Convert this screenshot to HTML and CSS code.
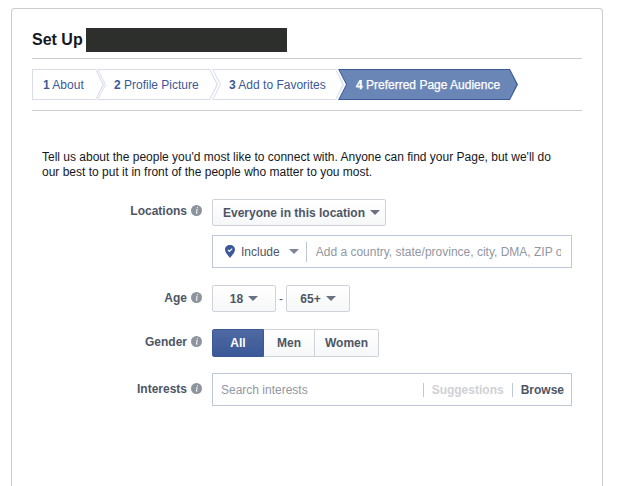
FILE: index.html
```html
<!DOCTYPE html>
<html lang="en">
<head>
<meta charset="utf-8">
<title>Set Up Page</title>
<link rel="stylesheet" href="styles.css">
</head>
<body>
<main class="card">
  <header class="title-row">
    <h1 class="title">Set Up</h1>
    <span class="redacted"></span>
  </header>
  <nav class="steps">
    <a class="step step-1"><b>1</b> About</a>
    <a class="step step-2"><b>2</b> Profile Picture</a>
    <a class="step step-3"><b>3</b> Add to Favorites</a>
    <a class="step step-4"><b>4</b> Preferred Page Audience</a>
  </nav>
  <p class="intro">Tell us about the people you'd most like to connect with. Anyone can find your Page, but we'll do our best to put it in front of the people who matter to you most.</p>
  <form class="form">
    <div class="label label-loc">Locations <svg class="info" viewBox="0 0 11 11"><circle cx="5.5" cy="5.5" r="5.5" fill="#8d949e"/><path d="M6 2.2h1.1l-.2 1.1H5.8zM5.4 4.3h1.3l-.7 3.4h.6l-.1.7H4.9l.7-3.4H5z" fill="#fff"/></svg></div>
    <div class="stack">
      <button type="button" class="btn btn-loc">Everyone in this location <i class="caret"></i></button>
      <div class="field field-include">
        <svg class="pin" viewBox="0 0 10 13"><path d="M5 0C2.2 0 0 2 0 4.700 0 7.600 3 10 5 13c2-3 5-5.400 5-8.300C10 2 7.800 0 5 0z" fill="#3b5998"/><path d="M2.900 4.900l1.500 1.500 2.800-2.800" fill="none" stroke="#fff" stroke-width="1.200"/></svg>
        <span class="include">Include</span><i class="caret caret-soft"></i>
        <span class="v-sep"></span>
        <span class="placeholder clip">Add a country, state/province, city, DMA, ZIP o</span>
      </div>
    </div>
    <div class="label label-age">Age <svg class="info" viewBox="0 0 11 11"><circle cx="5.5" cy="5.5" r="5.5" fill="#8d949e"/><path d="M6 2.2h1.1l-.2 1.1H5.8zM5.4 4.3h1.3l-.7 3.4h.6l-.1.7H4.9l.7-3.4H5z" fill="#fff"/></svg></div>
    <div class="age">
      <button type="button" class="btn btn-age">18 <i class="caret"></i></button>
      <span class="dash">-</span>
      <button type="button" class="btn btn-age">65+ <i class="caret"></i></button>
    </div>
    <div class="label label-gender">Gender <svg class="info" viewBox="0 0 11 11"><circle cx="5.5" cy="5.5" r="5.5" fill="#8d949e"/><path d="M6 2.2h1.1l-.2 1.1H5.8zM5.4 4.3h1.3l-.7 3.4h.6l-.1.7H4.9l.7-3.4H5z" fill="#fff"/></svg></div>
    <div class="segment">
      <button type="button" class="seg seg-on seg-all">All</button>
      <button type="button" class="seg seg-men">Men</button>
      <button type="button" class="seg seg-women">Women</button>
    </div>
    <div class="label label-int">Interests <svg class="info" viewBox="0 0 11 11"><circle cx="5.5" cy="5.5" r="5.5" fill="#8d949e"/><path d="M6 2.2h1.1l-.2 1.1H5.8zM5.4 4.3h1.3l-.7 3.4h.6l-.1.7H4.9l.7-3.4H5z" fill="#fff"/></svg></div>
    <div class="field field-int">
      <span class="placeholder grow">Search interests</span>
      <span class="v-sep v-sep-short"></span>
      <span class="suggest">Suggestions</span>
      <span class="v-sep v-sep-short"></span>
      <span class="browse">Browse</span>
    </div>
  </form>
</main>
</body>
</html>
```
FILE: styles.css
```css
* { box-sizing: border-box; }
html, body { height: 100%; overflow: hidden; }
body {
  margin: 0;
  padding: 8px 14px 0 11px;
  background: #fff;
  font-family: "Liberation Sans", Arial, sans-serif;
  font-size: 12px;
  color: #141823;
}
.card {
  height: 478px;
  padding: 0 20px;
  border: 1px solid #ccc;
  border-bottom: 0;
  border-radius: 4px 4px 0 0;
}
.title-row {
  display: flex;
  align-items: flex-start;
  gap: 3px;
  height: 50px;
  padding-top: 19px;
  border-bottom: 1px solid #ccc;
}
.title { margin: 0; font-size: 16px; line-height: 24px; font-weight: 700; color: #141823; }
.redacted { width: 201px; height: 24px; background: #2c2f2b; }
.steps {
  display: flex;
  height: 52px;
  padding: 10px 0;
  border-bottom: 1px solid #ccc;
}
.step {
  position: relative;
  isolation: isolate;
  display: flex;
  align-items: center;
  height: 31px;
  padding-left: 17px;
  color: #3b5998;
  background: #dadde9;
  white-space: pre;
  clip-path: polygon(0 0, calc(100% - 8px) 0, 100% 50%, calc(100% - 8px) 100%, 0 100%, 8px 50%);
}
.step::before {
  content: "";
  position: absolute;
  inset: 0;
  z-index: -1;
  background: #fff;
  clip-path: polygon(1.5px 1px, calc(100% - 8.5px) 1px, calc(100% - 1.5px) 50%, calc(100% - 8.5px) calc(100% - 1px), 1.5px calc(100% - 1px), 9px 50%);
}
.step b { font-weight: 700; }
.step-1 {
  width: 72px;
  padding-left: 11px;
  clip-path: polygon(0 0, calc(100% - 8px) 0, 100% 50%, calc(100% - 8px) 100%, 0 100%);
}
.step-1::before {
  clip-path: polygon(1px 1px, calc(100% - 8.5px) 1px, calc(100% - 1.5px) 50%, calc(100% - 8.5px) calc(100% - 1px), 1px calc(100% - 1px));
}
.step-2 { width: 121px; margin-left: -7px; }
.step-3 { width: 132px; margin-left: -6px; }
.step-4 {
  width: 180px;
  margin-left: -6px;
  padding-left: 18px;
  color: #fff;
  -webkit-text-stroke: 0.25px #fff;
  background: #3b5998;
}
.step-4::before { background: #6a86b6; }
.intro {
  width: 525px;
  margin: 39px 0 0 10px;
  font-size: 12px;
  line-height: 15px;
  color: #141823;
}
.form {
  display: grid;
  grid-template-columns: 170px 360px;
  column-gap: 10px;
  margin-top: 19px;
}
.label {
  display: flex;
  justify-content: flex-end;
  align-items: center;
  gap: 4px;
  height: 17px;
  font-weight: 700;
  color: #4e5665;
}
.info { width: 11px; height: 11px; flex: none; }
.label-loc { margin-top: 3px; }
.label-age { margin-top: 21px; }
.label-gender { margin-top: 21px; }
.label-int { margin-top: 23px; }
.stack { display: flex; flex-direction: column; align-items: flex-start; gap: 9px; }
.btn {
  display: inline-flex;
  align-items: center;
  justify-content: center;
  gap: 5px;
  height: 27px;
  padding: 0;
  border: 1px solid #cfd2d9;
  border-radius: 2px;
  background: linear-gradient(#fff, #f6f7f8);
  font: 700 12px "Liberation Sans", Arial, sans-serif;
  color: #4e5665;
}
.btn-loc { width: 174px; justify-content: flex-start; padding-left: 10px; }
.caret {
  display: inline-block;
  width: 0;
  height: 0;
  border: 5px solid transparent;
  border-top-color: #6a7180;
  border-bottom: 0;
}
.caret-soft { margin-left: 9px; border-top-color: #7d8594; }
.field {
  display: flex;
  align-items: center;
  width: 360px;
  height: 33px;
  border: 1px solid #bdc7d8;
  background: #fff;
}
.field-include { padding-left: 12px; }
.pin { width: 10px; height: 13px; flex: none; margin-right: 6px; }
.include { color: #4e5665; }
.v-sep { width: 1px; height: 20px; background: #bdc7d8; margin: 0 9px 0 7px; flex: none; }
.placeholder { color: #9197a3; white-space: nowrap; }
.clip { overflow: hidden; width: 245px; flex: none; }
.age { display: flex; align-items: center; margin-top: 17px; }
.btn-age { width: 64px; }
.dash { width: 10px; text-align: center; color: #4e5665; }
.segment { display: flex; margin-top: 17px; width: 167px; }
.seg {
  height: 28px;
  padding: 0;
  border: 1px solid #cfd2d9;
  border-left: 0;
  background: linear-gradient(#fff, #f6f7f8);
  font: 700 12px "Liberation Sans", Arial, sans-serif;
  color: #4e5665;
}
.seg-all { width: 52px; border: 1px solid #3b5998; border-radius: 2px 0 0 2px; }
.seg-men { width: 51px; }
.seg-women { width: 64px; border-radius: 0 2px 2px 0; }
.seg-on { background: linear-gradient(#4e69a2, #3b5998); color: #fff; }
.field-int { margin-top: 16px; padding: 0 7px 0 8px; }
.grow { flex: 1; }
.v-sep-short { height: 14px; margin: 0 8px; }
.suggest { font-weight: 700; color: #cfd1d5; }
.browse { font-weight: 700; color: #4e5665; }
```
